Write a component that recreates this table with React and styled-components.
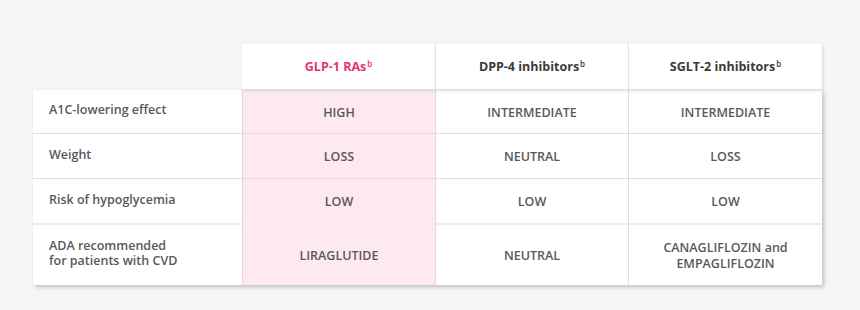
import React from 'react';
import styled, { createGlobalStyle } from 'styled-components';

const GlobalStyle = createGlobalStyle`
  html, body {
    margin: 0;
    padding: 0;
    background: #f5f5f5;
  }
  body {
    font-family: "Open Sans", "Liberation Sans", sans-serif;
  }
`;

const Page = styled.div`
  width: 860px;
  height: 310px;
  padding: 44px 0 0 33px;
  box-sizing: border-box;
  background: #f5f5f5;
`;

const COLS = '209px 193px 193px 194px';

const HeaderRow = styled.div`
  display: grid;
  grid-template-columns: ${COLS};
  position: relative;
  z-index: 2;
`;

const HeaderCell = styled.div`
  height: 46px;
  display: flex;
  align-items: center;
  justify-content: center;
  background: #fff;
  border-left: 1px solid #e2e2e2;
  border-bottom: 1px solid #dedede;
  box-sizing: border-box;
  font-size: 12.5px;
  font-weight: 700;
  color: ${p => (p.$accent ? '#e8317a' : '#3a3a3a')};
  box-shadow: 1px 1px 3px rgba(0, 0, 0, 0.12);

  &:nth-child(2) { border-left: none; }
`;

const Sup = styled.span`
  font-size: 8px;
  font-weight: 600;
  line-height: 0;
  margin-left: 1px;
  vertical-align: baseline;
  position: relative;
  top: -3px;
`;

const Spacer = styled.div``;

const Body = styled.div`
  width: 789px;
  background: #fff;
  box-shadow: 2px 2px 4px rgba(0, 0, 0, 0.22);
  position: relative;
  z-index: 1;
`;

const Row = styled.div`
  display: grid;
  grid-template-columns: ${COLS};
  height: ${p => p.$h}px;
  border-top: ${p => (p.$thick ? '2px solid #ececec' : '1px solid #dedede')};
  box-sizing: border-box;

  &:first-child { border-top: none; }
`;

const Label = styled.div`
  display: flex;
  flex-direction: column;
  justify-content: center;
  padding: 0 0 4px 16px;
  font-size: 12.5px;
  font-weight: 600;
  line-height: 15px;
  color: #595959;
`;

const Value = styled.div`
  display: flex;
  flex-direction: column;
  align-items: center;
  justify-content: center;
  text-align: center;
  padding-top: 2px;
  font-size: 12.5px;
  font-weight: 600;
  line-height: 16px;
  color: #595959;
  border-left: 1px solid ${p => (p.$accent ? '#ecd3dc' : '#dedede')};
  background: ${p => (p.$accent ? '#fde9ef' : '#fff')};
`;

const Line = styled.div``;

const rows = [
  { label: 'A1C-lowering effect', values: ['HIGH', 'INTERMEDIATE', 'INTERMEDIATE'], h: 43 },
  { label: 'Weight', values: ['LOSS', 'NEUTRAL', 'LOSS'], h: 45 },
  { label: 'Risk of hypoglycemia', values: ['LOW', 'LOW', 'LOW'], h: 45 },
  {
    label: ['ADA recommended', 'for patients with CVD'],
    values: ['LIRAGLUTIDE', 'NEUTRAL', ['CANAGLIFLOZIN and', 'EMPAGLIFLOZIN']],
    h: 62,
    thick: true,
  },
];

const lines = v => [].concat(v).map((l, i) => <Line key={i}>{l}</Line>);

export default function App() {
  return (
    <Page>
      <GlobalStyle />
      <HeaderRow>
        <Spacer />
        <HeaderCell $accent>GLP-1 RAs<Sup>b</Sup></HeaderCell>
        <HeaderCell>DPP-4 inhibitors<Sup>b</Sup></HeaderCell>
        <HeaderCell>SGLT-2 inhibitors<Sup>b</Sup></HeaderCell>
      </HeaderRow>
      <Body>
        {rows.map((r, i) => (
          <Row key={i} $h={r.h} $thick={r.thick}>
            <Label>{lines(r.label)}</Label>
            {r.values.map((v, j) => (
              <Value key={j} $accent={j === 0}>{lines(v)}</Value>
            ))}
          </Row>
        ))}
      </Body>
    </Page>
  );
}
